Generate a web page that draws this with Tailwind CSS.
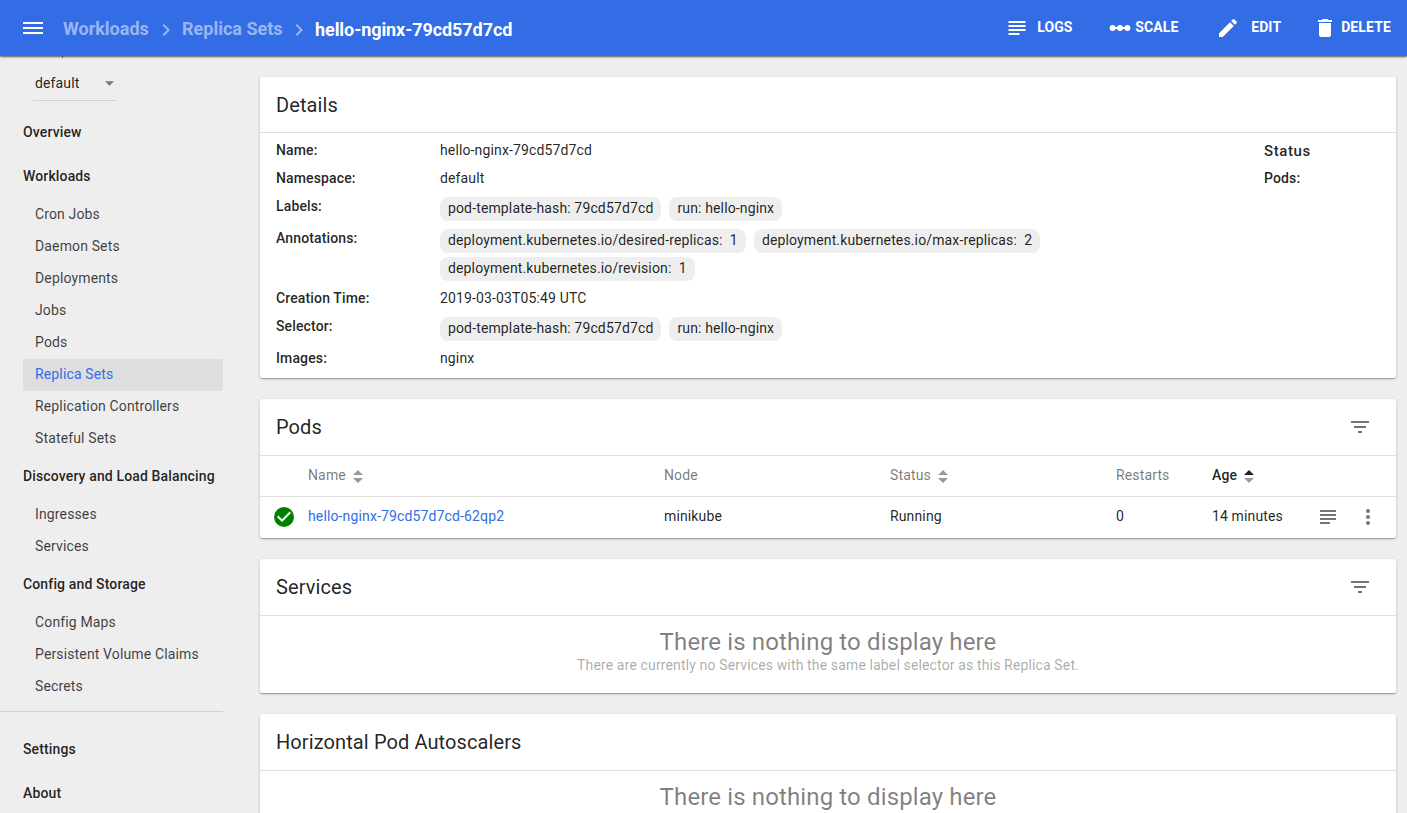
<!DOCTYPE html>
<html lang="en">
<head>
<meta charset="utf-8">
<title>Replica Set</title>
<script src="https://cdn.jsdelivr.net/npm/@tailwindcss/browser@4"></script>
</head>
<body class="h-[813px] overflow-hidden bg-[#eeeeee] font-[Roboto,sans-serif] text-sm text-black/87">
<div class="flex h-[813px] flex-col">
  <header class="z-10 flex h-14 shrink-0 items-center bg-[#326de6] pr-4 pl-[21px] text-white shadow-[0_1px_3px_0_rgba(0,0,0,.3),0_1px_1px_0_rgba(0,0,0,.2),0_2px_1px_-1px_rgba(0,0,0,.16)]">
    <svg class="size-6" viewBox="0 0 24 24" fill="currentColor"><path d="M2 6h20v2H2zM2 11h20v2H2zM2 16h20v2H2z"/></svg>
    <nav class="ml-[18px] flex h-14 flex-1 items-center text-lg font-bold">
      <span class="mt-0.5 w-[86px] whitespace-nowrap text-white/50">Workloads</span>
      <svg class="mr-1 ml-[5px] mt-[3px] size-6 text-white/50" viewBox="0 0 24 24" fill="currentColor"><path d="M8.600 16.600 13.200 12 8.600 7.400 10 6l6 6-6 6z"/></svg>
      <span class="mt-0.5 w-[101px] whitespace-nowrap text-white/50">Replica Sets</span>
      <svg class="mx-[4px] mt-[3px] size-6 text-white/50" viewBox="0 0 24 24" fill="currentColor"><path d="M8.600 16.600 13.200 12 8.600 7.400 10 6l6 6-6 6z"/></svg>
      <span class="mt-1 whitespace-nowrap tracking-[-.07px]">hello-nginx-79cd57d7cd</span>
    </nav>
    <div class="flex h-14 items-center font-bold tracking-[.12px]">
      <svg class="size-6" viewBox="0 0 24 24" fill="currentColor"><path d="M3.500 5h17v2h-17zM3.500 9h17v2h-17zM3.500 13h17v2h-17zM3.500 17h11v2h-11z"/></svg>
      <span class="mb-0.5 ml-2 w-[72px]">LOGS</span>
      <svg class="h-6 w-[22px]" viewBox="0 0 22 24" fill="currentColor"><path d="M3 11h16v2H3z"/><circle cx="3.600" cy="12" r="3"/><circle cx="11" cy="12" r="3"/><circle cx="18.400" cy="12" r="3"/></svg>
      <span class="mb-0.5 ml-1 w-[81px]">SCALE</span>
      <svg class="size-6" viewBox="0 0 24 24" fill="currentColor"><path d="M3 17.250V21h3.750L17.810 9.940l-3.750-3.750L3 17.250zM20.710 7.040a1 1 0 0 0 0-1.410l-2.340-2.340a1 1 0 0 0-1.410 0l-1.830 1.830 3.750 3.750 1.830-1.830z"/></svg>
      <span class="mb-0.5 ml-[11px] w-[62px]">EDIT</span>
      <svg class="size-6" viewBox="0 0 24 24" fill="currentColor"><path d="M6 19c0 1.100.9 2 2 2h8c1.100 0 2-.9 2-2V7H6v12zM19 4h-3.500l-1-1h-5l-1 1H5v2h14V4z"/></svg>
      <span class="mb-0.5 ml-1">DELETE</span>
    </div>
  </header>
  <div class="flex min-h-0 flex-1">
    <aside class="w-[260px] shrink-0 tracking-[.14px]">
      <div class="flex h-[54px] flex-col pl-[33px]">
        <div class="ml-[29px] h-0.5 w-px bg-black/50"></div>
        <div class="flex h-[43px] w-[83px] items-center justify-between border-b border-black/12 pt-[9px] pr-0.5 pl-0.5">
          <span class="mb-0.5">default</span>
          <svg class="mb-px h-[5px] w-[9px] text-black/50" viewBox="0 0 10 5" fill="currentColor"><path d="M0 0h10L5 5z"/></svg>
        </div>
      </div>
      <nav class="flex flex-col pl-[23px] font-medium">
        <a class="flex h-11 items-center">Overview</a>
        <a class="flex h-11 items-center">Workloads</a>
        <div class="flex w-[200px] flex-col pt-px font-normal text-black/75">
          <a class="h-8 pl-3 leading-[30px]">Cron Jobs</a>
          <a class="h-8 pl-3 leading-[30px]">Daemon Sets</a>
          <a class="h-8 pl-3 leading-[30px]">Deployments</a>
          <a class="h-8 pl-3 leading-[30px]">Jobs</a>
          <a class="h-8 pl-3 leading-[30px]">Pods</a>
          <a class="h-8 rounded-xs bg-[#dedede] pl-3 leading-[30px] text-[#326de6]">Replica Sets</a>
          <a class="h-8 pl-3 leading-[30px]">Replication Controllers</a>
          <a class="h-[31px] pl-3 leading-[30px]">Stateful Sets</a>
        </div>
        <a class="flex h-11 items-center whitespace-nowrap">Discovery and Load Balancing</a>
        <div class="flex w-[200px] flex-col font-normal text-black/75">
          <a class="h-8 pl-3 leading-8">Ingresses</a>
          <a class="h-8 pl-3 leading-8">Services</a>
        </div>
        <a class="flex h-11 items-center">Config and Storage</a>
        <div class="flex w-[200px] flex-col font-normal text-black/75">
          <a class="h-8 pl-3 leading-8">Config Maps</a>
          <a class="h-8 pl-3 leading-8">Persistent Volume Claims</a>
          <a class="h-8 pl-3 leading-8">Secrets</a>
        </div>
      </nav>
      <div class="mt-[9px] mb-[15px] h-px w-[223px] bg-black/12"></div>
      <nav class="flex flex-col pl-[23px] font-medium">
        <a class="flex h-11 items-center">Settings</a>
        <a class="flex h-11 items-center">About</a>
      </nav>
    </aside>
    <main class="flex w-[1136px] flex-col gap-[21px] pt-[21px] tracking-[.137px]">
      <section class="h-[301px] shrink-0 rounded-xs bg-white shadow-[0_1px_3px_0_rgba(0,0,0,.2),0_1px_1px_0_rgba(0,0,0,.14),0_2px_1px_-1px_rgba(0,0,0,.12)]">
        <h2 class="flex h-14 items-center border-b border-black/12 px-4 text-xl tracking-[.1px]">Details</h2>
        <div class="flex justify-between pt-1.5 pl-4">
          <dl class="grid w-[820px] grid-cols-[164px_1fr] grid-rows-[28px_28px_32px_60px_28px_32px_28px] leading-[22px]">
            <dt class="font-medium">Name:</dt><dd>hello-nginx-79cd57d7cd</dd>
            <dt class="font-medium">Namespace:</dt><dd>default</dd>
            <dt class="font-medium">Labels:</dt>
            <dd class="flex gap-2 pt-0.5"><span class="h-6 rounded-lg bg-[#eeeeee] px-2">pod-template-hash: 79cd57d7cd</span><span class="h-6 rounded-lg bg-[#eeeeee] px-2">run: hello-nginx</span></dd>
            <dt class="font-medium">Annotations:</dt>
            <dd class="flex flex-wrap content-start gap-x-2 gap-y-1 pt-0.5"><span class="h-6 rounded-lg bg-[#eeeeee] px-2">deployment.kubernetes.io/desired-replicas: &nbsp;1</span><span class="h-6 rounded-lg bg-[#eeeeee] px-2">deployment.kubernetes.io/max-replicas: &nbsp;2</span><span class="h-6 rounded-lg bg-[#eeeeee] px-2">deployment.kubernetes.io/revision: &nbsp;1</span></dd>
            <dt class="font-medium">Creation Time:</dt><dd>2019-03-03T05:49 UTC</dd>
            <dt class="font-medium">Selector:</dt>
            <dd class="flex gap-2 pt-0.5"><span class="h-6 rounded-lg bg-[#eeeeee] px-2">pod-template-hash: 79cd57d7cd</span><span class="h-6 rounded-lg bg-[#eeeeee] px-2">run: hello-nginx</span></dd>
            <dt class="font-medium">Images:</dt><dd>nginx</dd>
          </dl>
          <div class="w-[132px] font-medium">
            <div class="h-7 text-[15px] leading-6 tracking-[.6px]">Status</div>
            <div class="leading-[22px]">Pods:</div>
          </div>
        </div>
      </section>
      <section class="h-[139px] shrink-0 rounded-xs bg-white shadow-[0_1px_3px_0_rgba(0,0,0,.2),0_1px_1px_0_rgba(0,0,0,.14),0_2px_1px_-1px_rgba(0,0,0,.12)]">
        <div class="flex h-[57px] items-center justify-between border-b border-black/12 pr-6 pl-4">
          <h2 class="text-xl tracking-[.1px]">Pods</h2>
          <svg class="size-6 text-black/54" viewBox="0 0 24 24" fill="currentColor"><path d="M10 18h4v-2h-4zM3 6v2h18V6zM6 13h12v-2H6z"/></svg>
        </div>
        <div class="grid h-[41px] grid-cols-[48px_356px_226px_226px_96px_184px] items-center border-b border-black/12 text-black/54">
          <span></span>
          <span class="flex items-center gap-[7px]"><span class="pb-0.5">Name</span><svg class="h-[13px] w-2.5 text-black/40" viewBox="0 0 10 13" fill="currentColor"><path d="M0 5 5 0l5 5zM0 8h10l-5 5z"/></svg></span>
          <span class="pb-0.5">Node</span>
          <span class="flex items-center gap-[7px]"><span class="pb-0.5">Status</span><svg class="h-[13px] w-2.5 text-black/40" viewBox="0 0 10 13" fill="currentColor"><path d="M0 5 5 0l5 5zM0 8h10l-5 5z"/></svg></span>
          <span class="pb-0.5">Restarts</span>
          <span class="flex items-center gap-[7px] font-medium text-black/87"><span class="pb-0.5">Age</span><svg class="h-[13px] w-2.5" viewBox="0 0 10 13" fill="currentColor"><path d="M0 5 5 0l5 5z"/><path opacity=".45" d="M0 8h10l-5 5z"/></svg></span>
        </div>
        <div class="grid h-10 grid-cols-[48px_356px_226px_226px_96px_104px_40px_40px] items-center">
          <svg class="ml-3 size-6" viewBox="0 0 24 24"><circle cx="12" cy="12" r="10" fill="#008000"/><path fill="#fff" d="m10 17-5-5 1.410-1.410L10 14.170l7.590-7.590L19 8z"/></svg>
          <span class="pb-0.5 text-[#326de6]">hello-nginx-79cd57d7cd-62qp2</span>
          <span class="pb-0.5">minikube</span>
          <span class="pb-0.5">Running</span>
          <span class="pb-0.5">0</span>
          <span class="pb-0.5">14 minutes</span>
          <svg class="size-6 text-black/54" viewBox="0 0 24 24" fill="currentColor"><path d="M4 5h16v2H4zM4 9h16v2H4zM4 13h16v2H4zM4 17h10v2H4z"/></svg>
          <svg class="size-6 text-black/54" viewBox="0 0 24 24" fill="currentColor"><circle cx="12" cy="6" r="2"/><circle cx="12" cy="12" r="2"/><circle cx="12" cy="18" r="2"/></svg>
        </div>
      </section>
      <section class="h-[134px] shrink-0 rounded-xs bg-white shadow-[0_1px_3px_0_rgba(0,0,0,.2),0_1px_1px_0_rgba(0,0,0,.14),0_2px_1px_-1px_rgba(0,0,0,.12)]">
        <div class="flex h-[57px] items-center justify-between border-b border-black/12 pr-6 pl-4">
          <h2 class="text-xl tracking-[.1px]">Services</h2>
          <svg class="size-6 text-black/54" viewBox="0 0 24 24" fill="currentColor"><path d="M10 18h4v-2h-4zM3 6v2h18V6zM6 13h12v-2H6z"/></svg>
        </div>
        <div class="flex flex-col items-center pt-2.5">
          <p class="text-2xl tracking-[.13px] text-black/50">There is nothing to display here</p>
          <p class="-mt-[3px] leading-5 tracking-[.14px] text-black/35">There are currently no Services with the same label selector as this Replica Set.</p>
        </div>
      </section>
      <section class="h-[134px] shrink-0 rounded-xs bg-white shadow-[0_1px_3px_0_rgba(0,0,0,.2),0_1px_1px_0_rgba(0,0,0,.14),0_2px_1px_-1px_rgba(0,0,0,.12)]">
        <h2 class="flex h-[57px] items-center border-b border-black/12 px-4 text-xl tracking-[.1px]">Horizontal Pod Autoscalers</h2>
        <p class="pt-2.5 text-center text-2xl tracking-[.13px] text-black/50">There is nothing to display here</p>
      </section>
    </main>
  </div>
</div>
</body>
</html>
